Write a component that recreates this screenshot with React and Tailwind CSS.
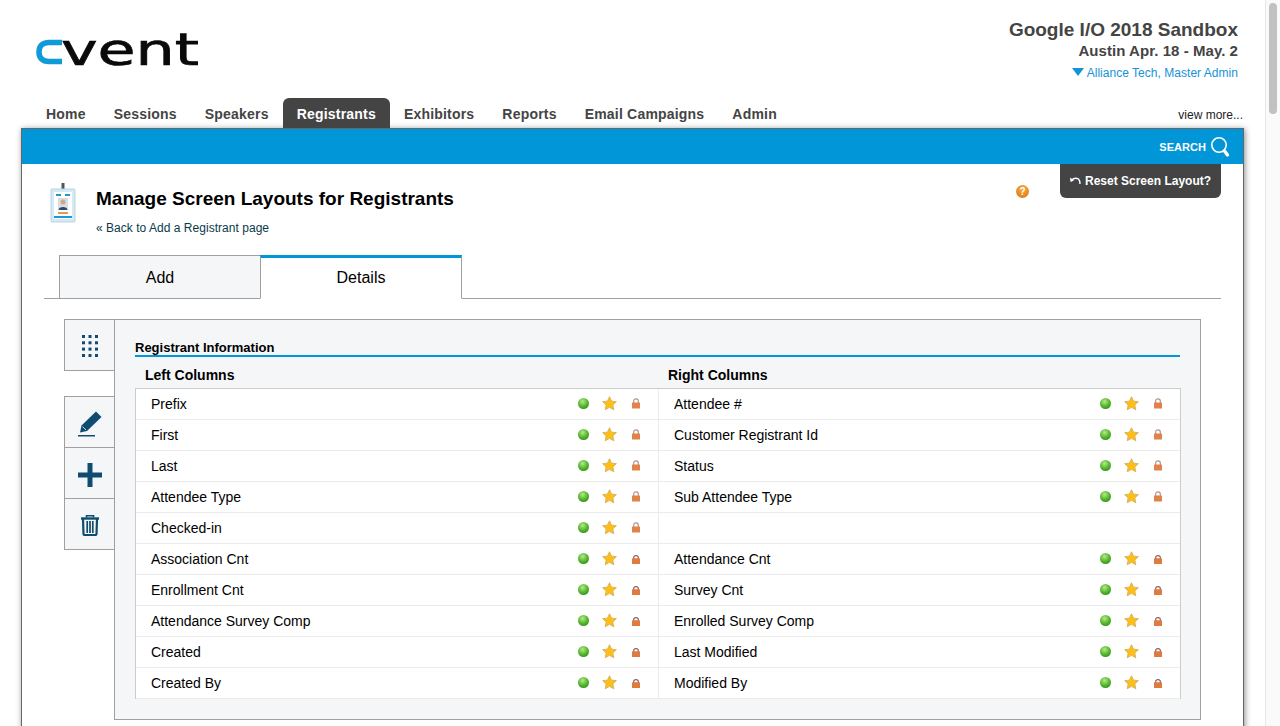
import React from 'react';

const navItems = ['Home', 'Sessions', 'Speakers', 'Registrants', 'Exhibitors', 'Reports', 'Email Campaigns', 'Admin'];

const rows = [
    ['Prefix', 'Attendee #'],
    ['First', 'Customer Registrant Id'],
    ['Last', 'Status'],
    ['Attendee Type', 'Sub Attendee Type'],
    ['Checked-in', ''],
    ['Association Cnt', 'Attendance Cnt'],
    ['Enrollment Cnt', 'Survey Cnt'],
    ['Attendance Survey Comp', 'Enrolled Survey Comp'],
    ['Created', 'Last Modified'],
    ['Created By', 'Modified By'],
];

const Logo = () => (
    <svg width="175" height="42" viewBox="0 0 175 42" className="block">
        <path d="M26 11.5 H13 C6 11.5 3 15.5 3 21 C3 26.5 6 30.5 13 30.5 H26" fill="none" stroke="#0f9bd7" strokeWidth="5.5" />
        <text x="25" y="33.5" fontFamily="'DejaVu Sans', sans-serif" fontSize="44" textLength="138" lengthAdjust="spacingAndGlyphs" fill="#0a0a0a" stroke="#0a0a0a" strokeWidth="0.7">vent</text>
    </svg>
);

const BadgeIcon = () => (
    <svg width="26" height="40" viewBox="0 0 26 40" className="block">
        <rect x="11.5" y="0" width="3" height="7" fill="#555" />
        <rect x="1" y="6" width="24" height="33" rx="1" fill="#d6e9f4" stroke="#b5d5e6" />
        <rect x="4" y="9" width="18" height="27" fill="#fff" />
        <rect x="6" y="11" width="5" height="2" fill="#1c9ad6" />
        <rect x="15" y="11" width="5" height="2" fill="#1c9ad6" />
        <rect x="8" y="15" width="10" height="12" fill="#dcdcdc" />
        <circle cx="13" cy="19" r="2.5" fill="#c9a98c" />
        <path d="M8.5 27 C8.5 23 17.5 23 17.5 27 Z" fill="#1f4e79" />
        <rect x="8" y="29" width="10" height="2" fill="#e8964f" />
        <rect x="4" y="33" width="18" height="2" fill="#1c9ad6" />
    </svg>
);

const SearchIcon = () => (
    <svg width="20" height="22" viewBox="0 0 20 22" className="block">
        <circle cx="9" cy="9" r="7.2" fill="none" stroke="#fff" strokeWidth="1.6" />
        <path d="M14.5 15 L17.5 19" stroke="#fff" strokeWidth="3.4" strokeLinecap="round" />
    </svg>
);

const GridIcon = () => (
    <svg width="16" height="22" viewBox="0 0 16 22" fill="#0f4c70" className="block">
        {[0, 6.5, 13].map((x) =>
            [0, 6.3, 12.6, 19].map((y) => <rect key={`${x}-${y}`} x={x} y={y} width="3" height="3" />)
        )}
    </svg>
);

const PencilIcon = () => (
    <svg width="24" height="26" viewBox="0 0 24 26" fill="#0f4c70" className="block">
        <path d="M18 0.5 L23.5 6 L9 20 L2 21.5 L3.5 14.5 Z" />
        <path d="M4.5 15.5 L8 19" stroke="#f5f6f8" strokeWidth="0.8" />
        <rect x="0" y="24" width="17" height="1.5" />
    </svg>
);

const PlusIcon = () => (
    <svg width="24" height="24" viewBox="0 0 24 24" fill="#0f4c70" className="block">
        <path d="M9.5 0 H14.5 V9.5 H24 V14.5 H14.5 V24 H9.5 V14.5 H0 V9.5 H9.5 Z" />
    </svg>
);

const TrashIcon = () => (
    <svg width="18" height="21" viewBox="0 0 18 21" fill="none" stroke="#0f4c70" className="block">
        <path d="M5.5 2.5 V0.8 H12.5 V2.5" strokeWidth="1.6" />
        <path d="M0 3.5 H18" strokeWidth="2.4" />
        <path d="M2 4 L2.5 19 Q2.6 20 3.6 20 H14.4 Q15.4 20 15.5 19 L16 4" strokeWidth="2.2" />
        <path d="M6.2 6 V18 M9 6 V18 M11.8 6 V18" strokeWidth="1.7" />
    </svg>
);

const StarIcon = () => (
    <svg width="15" height="15" viewBox="0 0 14 14" className="block">
        <polygon points="7,0.7 8.9,4.8 13.4,5.3 10.1,8.3 11,12.9 7,10.6 3,12.9 3.9,8.3 0.6,5.3 5.1,4.8" fill="#fdbf14" stroke="#d2ad5c" strokeWidth="0.8" />
    </svg>
);

// upper rows show the open padlock, the lower ones the shorter closed one
const LockIcon = ({ closed }) =>
    closed ? (
        <svg width="8" height="9" viewBox="0 0 8 9" className="block">
            <path d="M1.7 4 V2.6 Q1.7 0.7 4 0.7 Q6.3 0.7 6.3 2.6 V4" fill="none" stroke="#8a5a66" strokeWidth="1.2" />
            <rect x="0" y="3.3" width="8" height="5.7" rx="0.5" fill="#e07b3f" />
        </svg>
    ) : (
        <svg width="8" height="11" viewBox="0 0 8 11" className="block">
            <path d="M1.7 5 V3 Q1.7 0.8 4 0.8 Q6.3 0.8 6.3 3 V5" fill="none" stroke="#b39389" strokeWidth="1.2" />
            <rect x="0" y="4.5" width="8" height="6" rx="0.5" fill="#e0824a" />
        </svg>
    );

const StatusIcons = ({ closed }) => (
    <div className="flex items-center pr-[9px]">
        <span className="mb-[1px] flex w-[26px] justify-center">
            <span className="block h-[11px] w-[11px] rounded-full bg-[radial-gradient(circle_at_42%_32%,#b3ea8a,#55b52c_50%,#1f7a18)]"></span>
        </span>
        <span className="mb-[2px] flex w-[26px] justify-center"><StarIcon /></span>
        <span className={`flex w-[27px] justify-center ${closed ? '' : 'mb-[2px]'}`}><LockIcon closed={closed} /></span>
    </div>
);

const Cell = ({ label, divided, closed }) => (
    <div className={`flex h-[31px] items-center justify-between border-b border-[#ebebeb] pl-[15px] ${divided ? 'border-r' : ''}`}>
        <span>{label}</span>
        {label && <StatusIcons closed={closed} />}
    </div>
);

const ToolButton = ({ children, className = '' }) => (
    <div className={`flex w-[51px] items-center justify-center border-l border-[#a0a0a0] bg-[#f5f6f8] ${className}`}>
        {children}
    </div>
);

export default function App() {
    return (
        <div className="flex h-[726px] overflow-hidden bg-white font-['Liberation_Sans',Arial,sans-serif] text-black">
            <div className="min-w-0 flex-1">
                {/* HEADER */}
                <div className="flex h-[98px] justify-between pr-[27px]">
                    <div className="pl-[36px] pt-[31px]"><Logo /></div>
                    <div className="pt-[19px] text-right text-[#444]">
                        <div className="text-[19px] font-bold leading-[22px]">Google I/O 2018 Sandbox</div>
                        <div className="text-[15px] font-bold leading-[20px] tracking-[0.05px]">Austin Apr. 18 - May. 2</div>
                        <div className="mt-[2px] flex items-center justify-end gap-[3px] text-[12px] leading-[20px] tracking-[0.03px] text-[#1493d7]">
                            <span className="mb-[2px] h-0 w-0 border-x-[6px] border-t-[8px] border-x-transparent border-t-[#1493d7]"></span>
                            Alliance Tech, Master Admin
                        </div>
                    </div>
                </div>

                {/* NAV */}
                <div className="flex h-[30px] items-stretch justify-between pl-[32px] pr-[22px]">
                    <div className="flex">
                        {navItems.map((item) => (
                            <div
                                key={item}
                                className={`flex items-center px-[14px] pt-[2px] text-[14px] font-bold tracking-[0.2px] ${item === 'Registrants' ? 'rounded-t-[6px] bg-[#444] text-white' : 'text-[#444]'}`}
                            >
                                {item}
                            </div>
                        ))}
                    </div>
                    <div className="flex items-center pt-[3px] text-[12px] text-[#222]">view more...</div>
                </div>

                {/* PANEL */}
                <div className="mx-[21px] h-[620px] border border-[#666] shadow-[1px_1px_6px_rgba(0,0,0,0.45)]">
                    <div className="flex h-[35px] items-center justify-end gap-[4px] bg-[#0096d8] pr-[13px] text-[11px] font-bold tracking-[0.05px] text-white">
                        <span className="pt-[1px]">SEARCH</span>
                        <SearchIcon />
                    </div>

                    <div className="px-[22px]">
                        <div className="flex h-[91px] justify-between">
                            <div className="flex">
                                <div className="ml-[6px] mr-[20px] pt-[19px]"><BadgeIcon /></div>
                                <div>
                                    <h1 className="pt-[23px] text-[19px] font-bold leading-[24px]">Manage Screen Layouts for Registrants</h1>
                                    <p className="mt-[7px] text-[12px] leading-[20px] tracking-[0.03px] text-[#0b3a4a]">« Back to Add a Registrant page</p>
                                </div>
                            </div>
                            <div className="flex items-start">
                                <span className="mr-[31px] mt-[21px] flex h-[13px] w-[13px] items-center justify-center rounded-full bg-[radial-gradient(circle_at_50%_30%,#f5a93c,#dd7412)] text-[10px] font-bold leading-none text-white">?</span>
                                <div className="flex h-[34px] w-[161px] items-center gap-[4px] rounded-b-[6px] bg-[#444] pl-[10px] text-[12px] font-bold text-white">
                                    <svg width="11" height="9" viewBox="0 0 11 9" className="block">
                                        <path d="M1.5 3 Q5 0 8.5 2 Q10 3.5 10 7" fill="none" stroke="#fff" strokeWidth="1.4" />
                                        <path d="M0 0.5 L4 3.5 L0.5 5 Z" fill="#fff" />
                                    </svg>
                                    Reset Screen Layout?
                                </div>
                            </div>
                        </div>

                        {/* TABS */}
                        <div className="flex h-[44px] border-b border-[#a0a0a0] pl-[15px] text-[16px]">
                            <div className="flex h-[44px] w-[202px] items-center justify-center border border-[#a0a0a0] bg-[#f5f6f8] pt-[1px]">Add</div>
                            <div className="-ml-px flex h-[44px] w-[202px] items-center justify-center border-x border-t-[3px] border-b border-[#a0a0a0] border-t-[#0096d8] border-b-white bg-white">Details</div>
                        </div>

                        {/* EDITOR */}
                        <div className="ml-[20px] mt-[20px] flex">
                            <div className="flex flex-col">
                                <ToolButton className="h-[52px] border-y pt-[2px]"><GridIcon /></ToolButton>
                                <div className="mt-[25px] flex flex-col">
                                    <ToolButton className="h-[52px] border-y pt-[3px]"><PencilIcon /></ToolButton>
                                    <ToolButton className="h-[51px] border-b pt-[3px]"><PlusIcon /></ToolButton>
                                    <ToolButton className="h-[51px] border-b pt-[2px]"><TrashIcon /></ToolButton>
                                </div>
                            </div>
                            <div className="-ml-px h-[401px] w-[1087px] border border-[#a0a0a0] bg-[#f5f6f8] px-[20px] pt-[19px]">
                                <div className="border-b-2 border-[#0096d8] pt-[1px] text-[13px] font-bold leading-[15px]">Registrant Information</div>
                                <div className="grid h-[31px] grid-cols-[523px_1fr] items-center pl-[10px] pt-[5px] text-[14px] font-bold">
                                    <div>Left Columns</div>
                                    <div>Right Columns</div>
                                </div>
                                <div className="w-[1046px] border-x border-t border-[#ccc] bg-white text-[14px]">
                                    {rows.map(([left, right], i) => (
                                        <div key={left} className="grid grid-cols-[523px_1fr]">
                                            <Cell label={left} divided closed={i >= 5} />
                                            <Cell label={right} closed={i >= 5} />
                                        </div>
                                    ))}
                                </div>
                            </div>
                        </div>
                    </div>
                </div>
            </div>

            {/* SCROLLBAR */}
            <div className="w-[15px] shrink-0 border-l border-[#e6e6e6] bg-[#fafafa] px-[3px] pt-[3px]">
                <div className="h-[111px] rounded-full bg-[#c1c1c1]"></div>
            </div>
        </div>
    );
}
